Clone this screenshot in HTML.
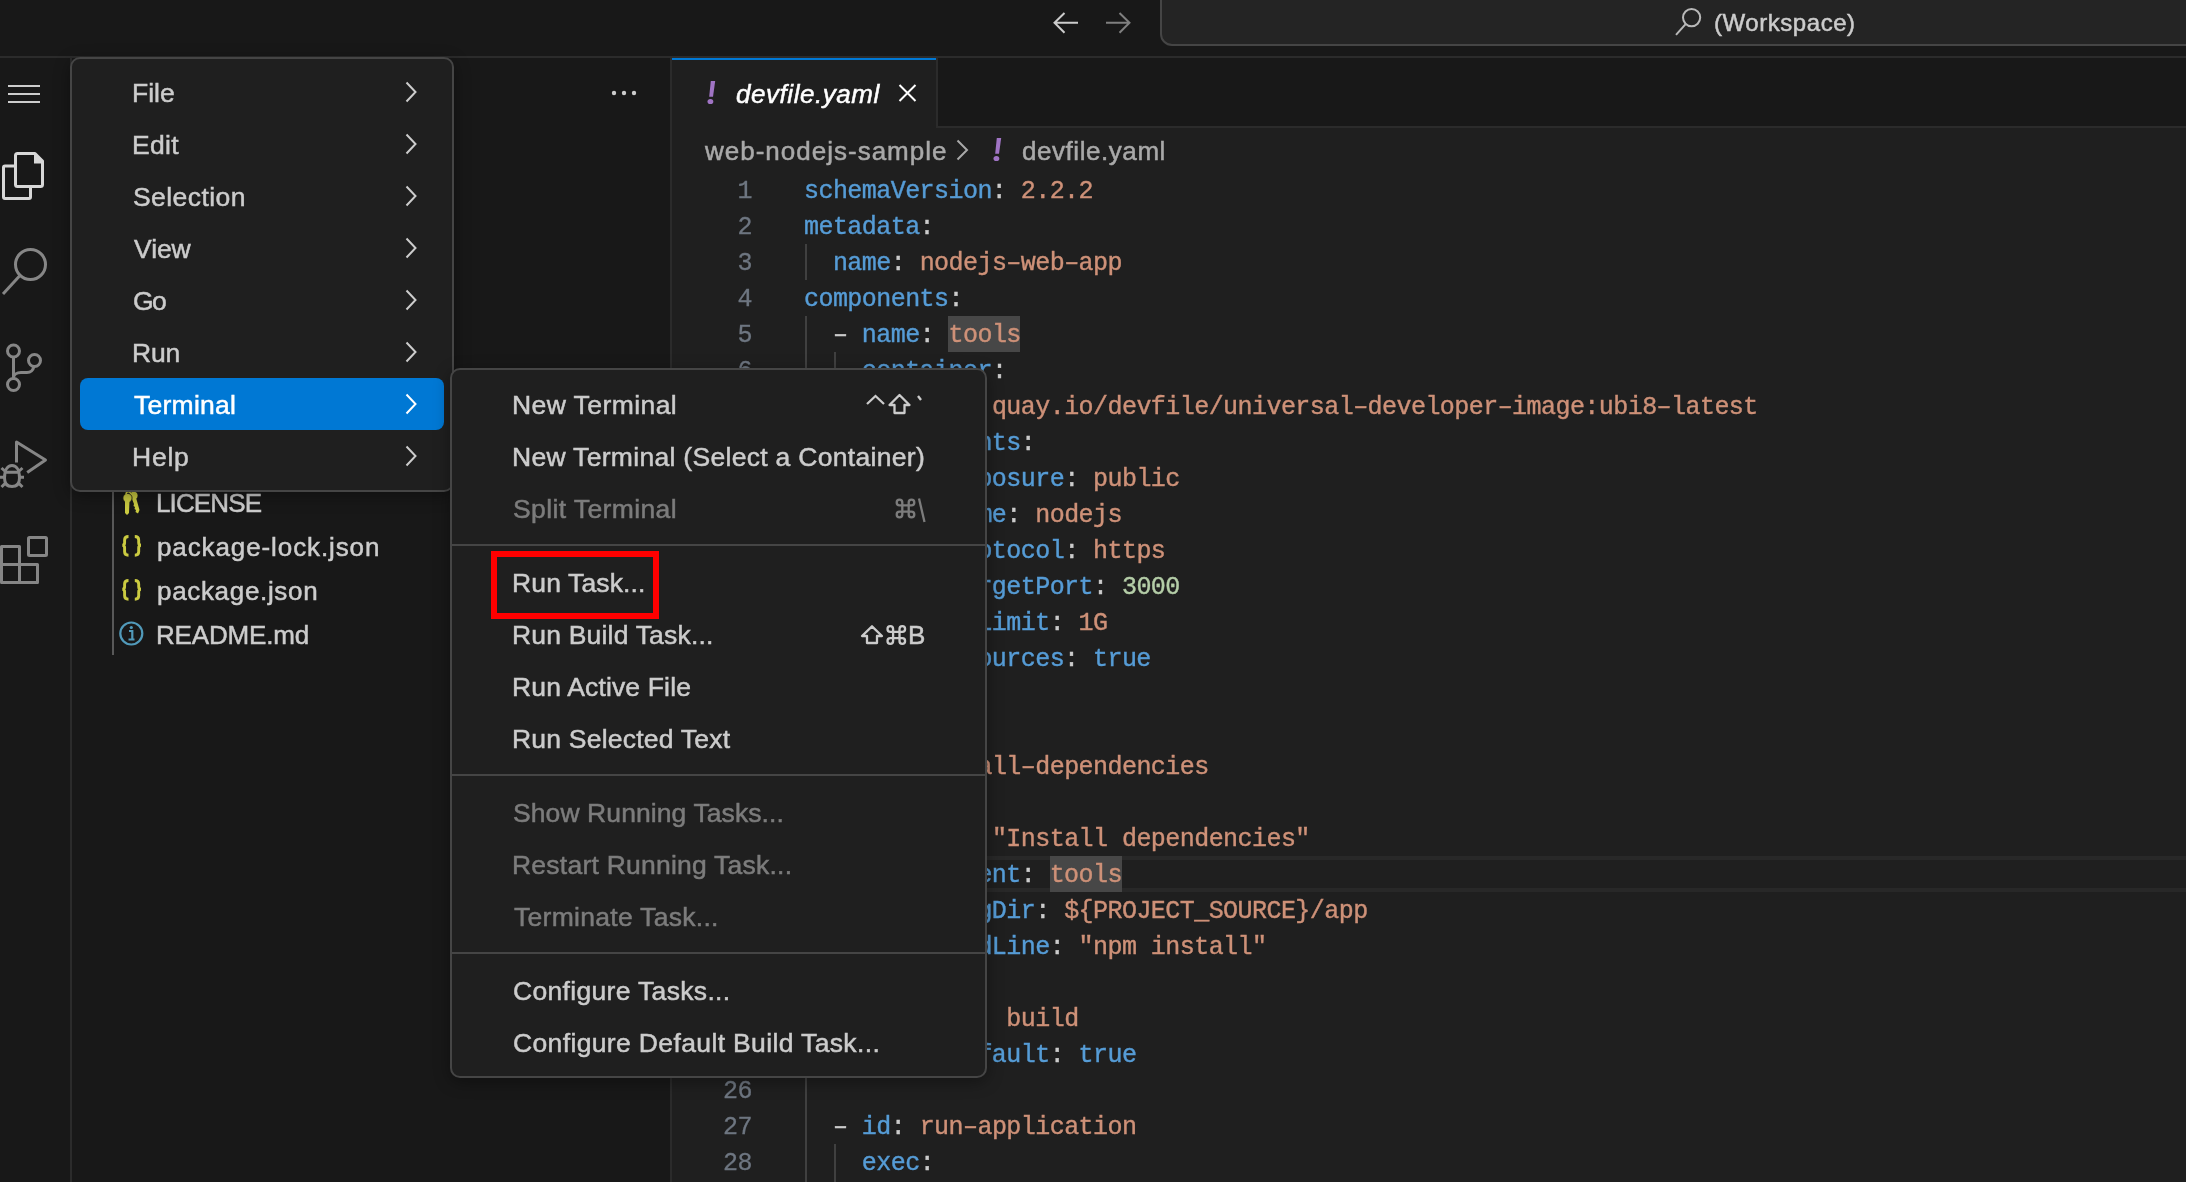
<!DOCTYPE html>
<html><head><meta charset="utf-8">
<style>
*{box-sizing:border-box;margin:0;padding:0}
html,body{width:2186px;height:1182px;overflow:hidden;background:#181818;font-family:"Liberation Sans",sans-serif;}
.t,.cl,.ln{will-change:transform}
.a{position:absolute}
.t{position:absolute;white-space:pre;font-family:"Liberation Sans",sans-serif;-webkit-text-stroke:0.5px currentColor}
svg{position:absolute;overflow:visible}
.ln{position:absolute;left:689px;width:63px;-webkit-text-stroke:0.3px currentColor;text-align:right;font-family:"Liberation Mono",monospace;font-size:25px;line-height:36px;color:#6e7681;letter-spacing:-0.55px;white-space:pre}
.cl{position:absolute;font-family:"Liberation Mono",monospace;font-size:25px;line-height:36px;white-space:pre;color:#cccccc;-webkit-text-stroke:0.4px currentColor}
.k{color:#569cd6}.s{color:#ce9178}.n{color:#b5cea8}.b{color:#569cd6}.p{color:#cccccc}
</style></head>
<body>
<!-- ============ TITLE BAR ============ -->
<div class="a" style="left:0;top:0;width:2186px;height:57px;background:#181818"></div>
<div class="a" style="left:0;top:56px;width:2186px;height:2px;background:#2b2b2b"></div>
<svg width="30" height="30" style="left:1050px;top:8px">
  <path d="M14.5 5 L4.5 14.8 L14.5 24.8 M4.5 14.8 H28" fill="none" stroke="#cccccc" stroke-width="2"/>
</svg>
<svg width="30" height="30" style="left:1102px;top:8px">
  <path d="M17.5 5 L27.5 14.8 L17.5 24.8 M27.5 14.8 H4" fill="none" stroke="#7f7f7f" stroke-width="2"/>
</svg>
<div class="a" style="left:1160px;top:-40px;width:1200px;height:86px;background:#242424;border:2px solid #454545;border-radius:12px"></div>
<svg width="30" height="30" style="left:1670px;top:4px">
  <circle cx="21.6" cy="13.6" r="8.6" fill="none" stroke="#b8b8b8" stroke-width="2"/>
  <path d="M15.6 20.2 L6 30.8" fill="none" stroke="#b8b8b8" stroke-width="2"/>
</svg>
<div class="t" style="left:1714.00px;top:11.30px;font-size:24px;line-height:24px;color:#cccccc;letter-spacing:0.550px;">(Workspace)</div>

<!-- ============ ACTIVITY BAR ============ -->
<div class="a" style="left:70px;top:58px;width:2px;height:1124px;background:#2b2b2b"></div>
<svg width="70" height="600" style="left:0;top:0">
  <path d="M8 86 H40 M8 94 H40 M8 102 H40" stroke="#cccccc" stroke-width="2"/>
  <!-- files -->
  <path d="M14 166 H5 Q3.5 166 3.5 167.5 V197 Q3.5 198.5 5 198.5 H29 Q30.5 198.5 30.5 197 V187" fill="none" stroke="#d7d7d7" stroke-width="3"/>
  <path d="M17 153.5 H35 L42.5 161 V184.5 Q42.5 186.5 40.5 186.5 H17.5 Q15.5 186.5 15.5 184.5 V155.5 Q15.5 153.5 17.5 153.5 Z" fill="none" stroke="#d7d7d7" stroke-width="3" stroke-linejoin="round"/>
  <path d="M34 153 L34 163.5 L43.5 163.5 Z" fill="#d7d7d7"/>
  <!-- search -->
  <circle cx="30.5" cy="264.5" r="15" fill="none" stroke="#868686" stroke-width="3"/>
  <path d="M19.5 276 L3 294" stroke="#868686" stroke-width="3"/>
  <!-- source control -->
  <circle cx="13.5" cy="351" r="6" fill="none" stroke="#868686" stroke-width="3"/>
  <circle cx="13.5" cy="384.5" r="6" fill="none" stroke="#868686" stroke-width="3"/>
  <circle cx="34.5" cy="360.5" r="6" fill="none" stroke="#868686" stroke-width="3"/>
  <path d="M13.5 357 V378.5 M34 366.5 C33 370.5 31 372.5 27 372.5 H21 C17 372.5 13.5 374.5 13.5 378" fill="none" stroke="#868686" stroke-width="3"/>
  <!-- run & debug -->
  <path d="M16.5 462.5 V442 L45.5 460 L27.2 472.5" fill="none" stroke="#868686" stroke-width="3" stroke-linejoin="round"/>
  <path d="M4.5 478 C4.5 470 7.5 465.5 12 465.5 C16.5 465.5 19.5 470 19.5 478 C19.5 484 16.5 486.5 12 486.5 C7.5 486.5 4.5 484 4.5 478 Z" fill="none" stroke="#868686" stroke-width="3"/>
  <path d="M5 472.3 H19 M0 477.3 H4 M20 477.3 H24 M1.5 468 L6 472 M22.5 468 L18 472 M1.5 487 L5.5 483 M22.5 487 L18.5 483" stroke="#868686" stroke-width="3"/>
  <!-- extensions -->
  <path d="M1.5 546.5 H19.5 V582.5 H1.5 Z M1.5 564.5 H37.5 V582.5 H19.5" fill="none" stroke="#868686" stroke-width="3" stroke-linejoin="round"/>
  <rect x="28.5" y="537.5" width="18" height="18" fill="none" stroke="#868686" stroke-width="3" rx="1"/>
</svg>

<!-- ============ SIDEBAR ============ -->
<div class="a" style="left:670px;top:58px;width:2px;height:1124px;background:#2b2b2b"></div>
<svg width="40" height="10" style="left:608px;top:88px">
  <circle cx="6" cy="5" r="2.2" fill="#cccccc"/><circle cx="16" cy="5" r="2.2" fill="#cccccc"/><circle cx="26" cy="5" r="2.2" fill="#cccccc"/>
</svg>
<div class="a" style="left:112px;top:140px;width:2px;height:515px;background:#585858"></div>
<!-- license key icon -->
<svg width="30" height="30" style="left:115px;top:488px">
  <path d="M16 8.5 L20 6 L24.5 22 L23 25.5 L20.5 24 L21 22 L19.5 21 L20 19 L18.5 18 L19 16 Z" fill="#cbcb41"/>
  <circle cx="18.8" cy="7.5" r="3.8" fill="#cbcb41"/>
  <circle cx="12.5" cy="10" r="4.6" fill="#cbcb41" stroke="#181818" stroke-width="0.8"/>
  <path d="M10 12 H14.5 L14 25 L12 27 L10 25 Z" fill="#cbcb41"/>
  <path d="M11 6.5 C11 3 15 3 16 6" fill="none" stroke="#cbcb41" stroke-width="1.5"/>
</svg>
<!-- json icons -->
<svg width="34" height="32" style="left:115px;top:530px"><path d="M13.5 6.5 C10.8 6.5 9.6 7.5 9.6 10 V12.8 C9.6 14.4 8.8 15.3 7.3 15.3 C8.8 15.3 9.6 16.2 9.6 17.8 V21.8 C9.6 24.3 10.8 25.2 13.5 25.2 M19.8 6.5 C22.5 6.5 23.7 7.5 23.7 10 V12.8 C23.7 14.4 24.5 15.3 26 15.3 C24.5 15.3 23.7 16.2 23.7 17.8 V21.8 C23.7 24.3 22.5 25.2 19.8 25.2" fill="none" stroke="#cbcb41" stroke-width="2.9" stroke-linejoin="miter"/></svg>
<svg width="34" height="32" style="left:115px;top:574px"><path d="M13.5 6.5 C10.8 6.5 9.6 7.5 9.6 10 V12.8 C9.6 14.4 8.8 15.3 7.3 15.3 C8.8 15.3 9.6 16.2 9.6 17.8 V21.8 C9.6 24.3 10.8 25.2 13.5 25.2 M19.8 6.5 C22.5 6.5 23.7 7.5 23.7 10 V12.8 C23.7 14.4 24.5 15.3 26 15.3 C24.5 15.3 23.7 16.2 23.7 17.8 V21.8 C23.7 24.3 22.5 25.2 19.8 25.2" fill="none" stroke="#cbcb41" stroke-width="2.9" stroke-linejoin="miter"/></svg>
<!-- info icon -->
<svg width="30" height="30" style="left:116px;top:618px">
  <circle cx="15.3" cy="15.5" r="11" fill="none" stroke="#519aba" stroke-width="2.2"/>
  <circle cx="15.3" cy="9.5" r="1.6" fill="#519aba"/>
  <path d="M13 13 H16.3 V21 M12.5 21.5 H18.5" fill="none" stroke="#519aba" stroke-width="2.2"/>
</svg>
<div class="t" style="left:155.50px;top:490.00px;font-size:26px;line-height:26px;color:#cccccc;letter-spacing:-0.867px;">LICENSE</div>
<div class="t" style="left:156.50px;top:533.60px;font-size:26px;line-height:26px;color:#cccccc;letter-spacing:0.894px;">package-lock.json</div>
<div class="t" style="left:156.50px;top:577.80px;font-size:26px;line-height:26px;color:#cccccc;letter-spacing:0.673px;">package.json</div>
<div class="t" style="left:155.50px;top:622.00px;font-size:26px;line-height:26px;color:#cccccc;letter-spacing:-0.175px;">README.md</div>

<!-- ============ EDITOR ============ -->
<div class="a" style="left:672px;top:58px;width:1514px;height:1124px;background:#1f1f1f"></div>
<div class="a" style="left:672px;top:58px;width:1514px;height:70px;background:#181818"></div>
<div class="a" style="left:672px;top:126px;width:1514px;height:2px;background:#2b2b2b"></div>
<div class="a" style="left:672px;top:58px;width:265px;height:70px;background:#1f1f1f;border-top:2px solid #0078d4"></div>
<div class="a" style="left:936px;top:58px;width:2px;height:70px;background:#2b2b2b"></div>
<svg width="20" height="30" style="left:700px;top:75px">
  <path d="M10.8 6 L15.2 6 L13 21.8 L9.2 21.8 Z" fill="#a074c4"/>
  <ellipse cx="10.4" cy="26.5" rx="2.9" ry="2.6" fill="#a074c4"/>
</svg>
<svg width="24" height="24" style="left:896px;top:81px">
  <path d="M3.5 4 L19.5 20 M19.5 4 L3.5 20" stroke="#ffffff" stroke-width="2"/>
</svg>
<!-- breadcrumbs -->
<svg width="16" height="24" style="left:955px;top:138px">
  <path d="M2.5 2.5 L12 12 L2.5 21.5" fill="none" stroke="#a9a9a9" stroke-width="2"/>
</svg>
<svg width="20" height="30" style="left:986px;top:132px">
  <path d="M10.8 6 L15.2 6 L13 21.8 L9.2 21.8 Z" fill="#a074c4"/>
  <ellipse cx="10.4" cy="26.5" rx="2.9" ry="2.6" fill="#a074c4"/>
</svg>
<!-- word highlights -->
<div class="a" style="left:948px;top:316px;width:72px;height:36px;background:#474747"></div>
<div class="a" style="left:672px;top:856px;width:1514px;height:36px;border-top:4px solid #282828;border-bottom:4px solid #282828"></div>
<div class="a" style="left:1050px;top:856px;width:72px;height:36px;background:#474747"></div>
<!-- indent guides -->
<div class="a" style="left:805px;top:244px;width:2px;height:36px;background:#404040"></div>
<div class="a" style="left:805px;top:316px;width:2px;height:468px;background:#404040"></div>
<div class="a" style="left:834px;top:352px;width:2px;height:300px;background:#404040"></div>
<div class="a" style="left:805px;top:1072px;width:2px;height:111px;background:#404040"></div>
<div class="a" style="left:834px;top:1144px;width:2px;height:39px;background:#404040"></div>
<div class="t" style="left:735.50px;top:81.00px;font-size:26px;line-height:26px;color:#ffffff;letter-spacing:0.545px;font-style:italic;">devfile.yaml</div>
<div class="t" style="left:704.50px;top:138.00px;font-size:26px;line-height:26px;color:#a9a9a9;letter-spacing:1.000px;">web-nodejs-sample</div>
<div class="t" style="left:1021.80px;top:138.40px;font-size:26px;line-height:26px;color:#a9a9a9;letter-spacing:0.555px;">devfile.yaml</div>
<div class="ln" style="top:173.50px;">1</div>
<div class="cl" style="top:173.50px;left:803.5px;letter-spacing:-0.552px"><span class="k">schemaVersion</span><span class="p">: </span><span class="s">2.2.2</span></div>
<div class="ln" style="top:209.50px;">2</div>
<div class="cl" style="top:209.50px;left:803.5px;letter-spacing:-0.552px"><span class="k">metadata</span><span class="p">:</span></div>
<div class="ln" style="top:245.50px;">3</div>
<div class="cl" style="top:245.50px;left:803.5px;letter-spacing:-0.552px"><span class="w">  </span><span class="k">name</span><span class="p">: </span><span class="s">nodejs–web–app</span></div>
<div class="ln" style="top:281.50px;">4</div>
<div class="cl" style="top:281.50px;left:803.5px;letter-spacing:-0.552px"><span class="k">components</span><span class="p">:</span></div>
<div class="ln" style="top:317.50px;">5</div>
<div class="cl" style="top:317.50px;left:803.5px;letter-spacing:-0.552px"><span class="w">  </span><span class="p">– </span><span class="k">name</span><span class="p">: </span><span class="s">tools</span></div>
<div class="ln" style="top:353.50px;">6</div>
<div class="cl" style="top:353.50px;left:803.5px;letter-spacing:-0.552px"><span class="w">    </span><span class="k">container</span><span class="p">:</span></div>
<div class="ln" style="top:389.50px;">7</div>
<div class="cl" style="top:389.50px;left:803.5px;letter-spacing:-0.552px"><span class="w">      </span><span class="k">image</span><span class="p">: </span><span class="s">quay.io/devfile/universal–developer–image:ubi8–latest</span></div>
<div class="ln" style="top:425.50px;">8</div>
<div class="cl" style="top:425.50px;left:803.5px;letter-spacing:-0.552px"><span class="w">      </span><span class="k">endpoints</span><span class="p">:</span></div>
<div class="ln" style="top:461.50px;">9</div>
<div class="cl" style="top:461.50px;left:803.5px;letter-spacing:-0.552px"><span class="w">        </span><span class="p">– </span><span class="k">exposure</span><span class="p">: </span><span class="s">public</span></div>
<div class="ln" style="top:497.50px;">10</div>
<div class="cl" style="top:497.50px;left:803.5px;letter-spacing:-0.552px"><span class="w">          </span><span class="k">name</span><span class="p">: </span><span class="s">nodejs</span></div>
<div class="ln" style="top:533.50px;">11</div>
<div class="cl" style="top:533.50px;left:803.5px;letter-spacing:-0.552px"><span class="w">          </span><span class="k">protocol</span><span class="p">: </span><span class="s">https</span></div>
<div class="ln" style="top:569.50px;">12</div>
<div class="cl" style="top:569.50px;left:803.5px;letter-spacing:-0.552px"><span class="w">          </span><span class="k">targetPort</span><span class="p">: </span><span class="n">3000</span></div>
<div class="ln" style="top:605.50px;">13</div>
<div class="cl" style="top:605.50px;left:803.5px;letter-spacing:-0.552px"><span class="w">      </span><span class="k">memoryLimit</span><span class="p">: </span><span class="s">1G</span></div>
<div class="ln" style="top:641.50px;">14</div>
<div class="cl" style="top:641.50px;left:803.5px;letter-spacing:-0.552px"><span class="w">      </span><span class="k">mountSources</span><span class="p">: </span><span class="b">true</span></div>
<div class="ln" style="top:677.50px;">15</div>
<div class="cl" style="top:677.50px;left:803.5px;letter-spacing:-0.552px"></div>
<div class="ln" style="top:713.50px;">16</div>
<div class="cl" style="top:713.50px;left:803.5px;letter-spacing:-0.552px"><span class="k">commands</span><span class="p">:</span></div>
<div class="ln" style="top:749.50px;">17</div>
<div class="cl" style="top:749.50px;left:803.5px;letter-spacing:-0.552px"><span class="w">  </span><span class="p">– </span><span class="k">id</span><span class="p">: </span><span class="s">install–dependencies</span></div>
<div class="ln" style="top:785.50px;">18</div>
<div class="cl" style="top:785.50px;left:803.5px;letter-spacing:-0.552px"><span class="w">    </span><span class="k">exec</span><span class="p">:</span></div>
<div class="ln" style="top:821.50px;">19</div>
<div class="cl" style="top:821.50px;left:803.5px;letter-spacing:-0.552px"><span class="w">      </span><span class="k">label</span><span class="p">: </span><span class="s">&quot;Install dependencies&quot;</span></div>
<div class="ln" style="top:857.50px;color:#cccccc;">20</div>
<div class="cl" style="top:857.50px;left:803.5px;letter-spacing:-0.552px"><span class="w">      </span><span class="k">component</span><span class="p">: </span><span class="s">tools</span></div>
<div class="ln" style="top:893.50px;">21</div>
<div class="cl" style="top:893.50px;left:803.5px;letter-spacing:-0.552px"><span class="w">      </span><span class="k">workingDir</span><span class="p">: </span><span class="s">${PROJECT_SOURCE}/app</span></div>
<div class="ln" style="top:929.50px;">22</div>
<div class="cl" style="top:929.50px;left:803.5px;letter-spacing:-0.552px"><span class="w">      </span><span class="k">commandLine</span><span class="p">: </span><span class="s">&quot;npm install&quot;</span></div>
<div class="ln" style="top:965.50px;">23</div>
<div class="cl" style="top:965.50px;left:803.5px;letter-spacing:-0.552px"><span class="w">      </span><span class="k">group</span><span class="p">:</span></div>
<div class="ln" style="top:1001.50px;">24</div>
<div class="cl" style="top:1001.50px;left:803.5px;letter-spacing:-0.552px"><span class="w">        </span><span class="k">kind</span><span class="p">: </span><span class="s">build</span></div>
<div class="ln" style="top:1037.50px;">25</div>
<div class="cl" style="top:1037.50px;left:803.5px;letter-spacing:-0.552px"><span class="w">        </span><span class="k">isDefault</span><span class="p">: </span><span class="b">true</span></div>
<div class="ln" style="top:1073.50px;">26</div>
<div class="cl" style="top:1073.50px;left:803.5px;letter-spacing:-0.552px"></div>
<div class="ln" style="top:1109.50px;">27</div>
<div class="cl" style="top:1109.50px;left:803.5px;letter-spacing:-0.552px"><span class="w">  </span><span class="p">– </span><span class="k">id</span><span class="p">: </span><span class="s">run–application</span></div>
<div class="ln" style="top:1145.50px;">28</div>
<div class="cl" style="top:1145.50px;left:803.5px;letter-spacing:-0.552px"><span class="w">    </span><span class="k">exec</span><span class="p">:</span></div>
<div class="ln" style="top:1181.50px;">29</div>
<div class="cl" style="top:1181.50px;left:803.5px;letter-spacing:-0.552px"><span class="w">      </span><span class="k">label</span><span class="p">: </span><span class="s">&quot;Run the application&quot;</span></div>

<!-- ============ MENU 1 ============ -->
<div class="a" style="left:70px;top:57px;width:384px;height:435px;background:#1f1f1f;border:2px solid #454545;border-radius:10px;box-shadow:0 4px 16px rgba(0,0,0,0.36)"></div>
<div class="a" style="left:80px;top:378px;width:364px;height:52px;background:#0078d4;border-radius:8px"></div>
<svg width="20" height="420" style="left:400px;top:60px">
  <path d="M6.5 22.5 L15.5 32 L6.5 41.5 M6.5 74.5 L15.5 84 L6.5 93.5 M6.5 126.5 L15.5 136 L6.5 145.5 M6.5 178.5 L15.5 188 L6.5 197.5 M6.5 230.5 L15.5 240 L6.5 249.5 M6.5 282.5 L15.5 292 L6.5 301.5 M6.5 386.5 L15.5 396 L6.5 405.5" fill="none" stroke="#cccccc" stroke-width="2"/>
  <path d="M6.5 334.5 L15.5 344 L6.5 353.5" fill="none" stroke="#ffffff" stroke-width="2"/>
</svg>
<div class="t" style="left:131.50px;top:79.50px;font-size:26.5px;line-height:26.5px;color:#cccccc;letter-spacing:0.000px;">File</div>
<div class="t" style="left:131.50px;top:131.50px;font-size:26.5px;line-height:26.5px;color:#cccccc;letter-spacing:0.333px;">Edit</div>
<div class="t" style="left:132.50px;top:183.50px;font-size:26.5px;line-height:26.5px;color:#cccccc;letter-spacing:0.425px;">Selection</div>
<div class="t" style="left:133.50px;top:235.50px;font-size:26.5px;line-height:26.5px;color:#cccccc;letter-spacing:-0.067px;">View</div>
<div class="t" style="left:132.50px;top:287.50px;font-size:26.5px;line-height:26.5px;color:#cccccc;letter-spacing:-1.500px;">Go</div>
<div class="t" style="left:131.50px;top:339.50px;font-size:26.5px;line-height:26.5px;color:#cccccc;letter-spacing:-0.250px;">Run</div>
<div class="t" style="left:133.50px;top:391.50px;font-size:26.5px;line-height:26.5px;color:#ffffff;letter-spacing:0.257px;">Terminal</div>
<div class="t" style="left:131.50px;top:443.50px;font-size:26.5px;line-height:26.5px;color:#cccccc;letter-spacing:0.767px;">Help</div>

<!-- ============ SUBMENU ============ -->
<div class="a" style="left:450px;top:368px;width:537px;height:710px;background:#1f1f1f;border:2px solid #454545;border-radius:10px;box-shadow:0 4px 16px rgba(0,0,0,0.36)"></div>
<div class="a" style="left:452px;top:544px;width:533px;height:2px;background:#454545"></div>
<div class="a" style="left:452px;top:774px;width:533px;height:2px;background:#454545"></div>
<div class="a" style="left:452px;top:952px;width:533px;height:2px;background:#454545"></div>
<!-- shortcuts -->
<svg width="70" height="30" style="left:860px;top:391px">
  <path d="M7 13 L15.5 5 L24 13" fill="none" stroke="#cccccc" stroke-width="2.3"/>
  <path d="M39.5 4 L29.5 14 H34.5 V22 H44.5 V14 H49.5 Z" fill="none" stroke="#cccccc" stroke-width="2.3" stroke-linejoin="round"/>
  <path d="M58 5 L61 9" stroke="#cccccc" stroke-width="2.3"/>
</svg>
<svg width="40" height="30" style="left:890px;top:495px">
<g transform="translate(5.5,3.5)"><path d="M6.8 4 V16 M13.2 4 V16 M4 6.8 H16 M4 13.2 H16 M6.8 4 A2.8 2.8 0 1 0 4 6.8 M13.2 4 A2.8 2.8 0 1 1 16 6.8 M4 13.2 A2.8 2.8 0 1 0 6.8 16 M16 13.2 A2.8 2.8 0 1 1 13.2 16" fill="none" stroke="#7c7c7c" stroke-width="2.3"/></g>
  <path d="M29 3.5 L34.5 27" stroke="#7c7c7c" stroke-width="2.3"/>
</svg>
<svg width="70" height="30" style="left:855px;top:621px">
  <path d="M17 5.3 L7 15 H12 V22 H22 V15 H27 Z" fill="none" stroke="#cccccc" stroke-width="2.3" stroke-linejoin="round"/>
<g transform="translate(31.3,4)"><path d="M6.8 4 V16 M13.2 4 V16 M4 6.8 H16 M4 13.2 H16 M6.8 4 A2.8 2.8 0 1 0 4 6.8 M13.2 4 A2.8 2.8 0 1 1 16 6.8 M4 13.2 A2.8 2.8 0 1 0 6.8 16 M16 13.2 A2.8 2.8 0 1 1 13.2 16" fill="none" stroke="#cccccc" stroke-width="2.3"/></g>
</svg>
<div class="t" style="left:908px;top:622px;font-size:26px;line-height:26px;color:#cccccc">B</div>
<div class="t" style="left:511.50px;top:391.70px;font-size:26.5px;line-height:26.5px;color:#cccccc;letter-spacing:0.427px;">New Terminal</div>
<div class="t" style="left:511.50px;top:443.70px;font-size:26.5px;line-height:26.5px;color:#cccccc;letter-spacing:0.303px;">New Terminal (Select a Container)</div>
<div class="t" style="left:512.50px;top:495.70px;font-size:26.5px;line-height:26.5px;color:#7c7c7c;letter-spacing:0.385px;">Split Terminal</div>
<div class="t" style="left:511.50px;top:569.80px;font-size:26.5px;line-height:26.5px;color:#cccccc;letter-spacing:0.140px;">Run Task...</div>
<div class="t" style="left:511.50px;top:621.80px;font-size:26.5px;line-height:26.5px;color:#cccccc;letter-spacing:0.188px;">Run Build Task...</div>
<div class="t" style="left:511.50px;top:673.80px;font-size:26.5px;line-height:26.5px;color:#cccccc;letter-spacing:0.157px;">Run Active File</div>
<div class="t" style="left:511.50px;top:725.80px;font-size:26.5px;line-height:26.5px;color:#cccccc;letter-spacing:0.219px;">Run Selected Text</div>
<div class="t" style="left:512.50px;top:799.80px;font-size:26.5px;line-height:26.5px;color:#7c7c7c;letter-spacing:0.090px;">Show Running Tasks...</div>
<div class="t" style="left:511.50px;top:851.80px;font-size:26.5px;line-height:26.5px;color:#7c7c7c;letter-spacing:0.232px;">Restart Running Task...</div>
<div class="t" style="left:513.50px;top:903.80px;font-size:26.5px;line-height:26.5px;color:#7c7c7c;letter-spacing:0.288px;">Terminate Task...</div>
<div class="t" style="left:512.50px;top:977.80px;font-size:26.5px;line-height:26.5px;color:#cccccc;letter-spacing:0.324px;">Configure Tasks...</div>
<div class="t" style="left:512.50px;top:1029.80px;font-size:26.5px;line-height:26.5px;color:#cccccc;letter-spacing:0.360px;">Configure Default Build Task...</div>

<!-- red box -->
<div class="a" style="left:491px;top:551px;width:168px;height:68px;border:6px solid #ff0000"></div>
</body></html>
